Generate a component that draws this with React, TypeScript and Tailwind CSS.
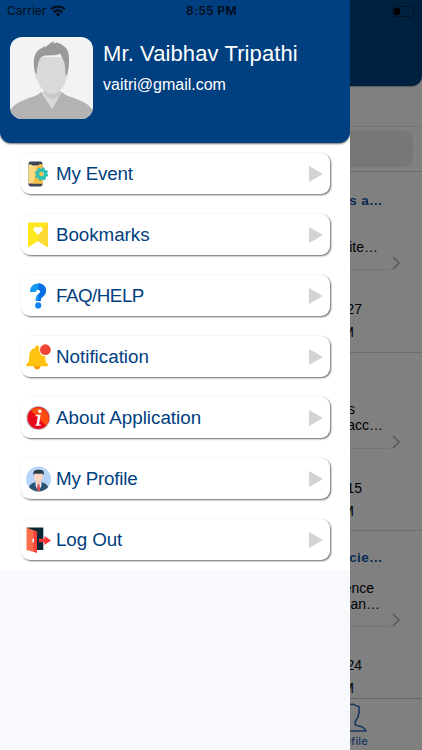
import React from 'react';

function WifiIcon() {
  return (
    <svg width="16" height="12" viewBox="0 0 16 12" fill="none" stroke="#000c18" strokeWidth="2.2">
      <path d="M1.2 4.3a9.7 9.7 0 0 1 13.6 0" />
      <path d="M3.7 7.2a6.1 6.1 0 0 1 8.6 0" />
      <path d="M5.6 9.1a3.5 3.5 0 0 1 4.8 0L8 11.6z" fill="#000c18" stroke="none" />
    </svg>
  );
}

function EventIcon() {
  return (
    <svg width="26" height="26" viewBox="0 0 26 26">
      <rect x="2.5" y="0.5" width="14" height="25" rx="2.2" fill="#3b4757" />
      <path d="M2.5 3.5h3l1 1h6l1-1h3v19h-14z" fill="#fedb82" />
      <path d="M11 4.5h1.5l1-1h3v19H7z" fill="#fbbe45" />
      <circle cx="15.5" cy="13" r="3.9" fill="none" stroke="#2fc1b6" strokeWidth="3.2" />
      <circle cx="15.5" cy="13" r="5.8" fill="none" stroke="#2fc1b6" strokeWidth="1.8" strokeDasharray="2.55 2" />
    </svg>
  );
}

function BookmarkIcon() {
  return (
    <svg width="26" height="26" viewBox="0 0 26 26">
      <path d="M2 0.5h20v25l-10-6.5-10 6.5z" fill="#ffe91c" />
      <path d="M22 0.5v25L12 19V13z" fill="#fdd934" />
      <path d="M12 13 8 9c-2-2.8 1.6-6 4-3.3C14.4 3 18 6.2 16 9z" fill="#fff" />
    </svg>
  );
}

function HelpIcon() {
  return (
    <svg width="26" height="26" viewBox="1 0 26 26">
      <path d="M5 9C5 3.5 8.4.5 13.1.5 17.7.5 21 3.2 21 7.5c0 3.4-1.8 5.3-3.7 6.7-1.1.8-1.5 1.4-1.5 3.8h-5.2c0-4.3 1-5.600 3.3-7.200 1.900-1.400 1.500-4.100-.8-4.100-1.500 0-2.300.800-2.300 2.300z" fill="#149bf3" />
      <path d="M13.1.5C17.7.5 21 3.2 21 7.5c0 3.4-1.8 5.3-3.7 6.7-1.1.8-1.500 1.400-1.500 3.800h-2.600v-6.600l.7-.6c1.900-1.400 1.500-4.100-.8-4.100z" fill="#086ee2" />
      <circle cx="13.2" cy="22.4" r="3.1" fill="#1383ed" />
    </svg>
  );
}

function BellIcon() {
  return (
    <svg width="26" height="26" viewBox="0 0 26 26">
      <path d="M7.800 22h6.800c-.3 4.500-6.500 4.500-6.800 0z" fill="#f8990c" />
      <path d="M11.200 1.400c1.300 0 2 .8 2 2 0 7 2.300 8.500 6.100 8.700v1.600c0 3.900 1 5.100 2.500 6.200.9.7.6 2.300-.7 2.300H1.400C0 22.200-.2 20.500.8 19.800c2.100-1.600 2.400-3.400 2.400-7.200 0-4.800 2.100-7.800 6-8.700V3.400c0-1.200.8-2 2-2z" fill="#ffc20e" />
      <circle cx="19.400" cy="5.700" r="5.400" fill="#f24537" />
    </svg>
  );
}

function InfoIcon() {
  return (
    <svg width="26" height="26" viewBox="0 0 26 26">
      <circle cx="12.300" cy="13" r="12" fill="#c4bfc0" />
      <circle cx="12.300" cy="13" r="10.900" fill="#e8081c" />
      <path d="M4.600 5.300a10.900 10.900 0 0 1 15.400 15.400z" fill="#fc4d10" />
      <circle cx="13.800" cy="6.200" r="1.700" fill="#fff" />
      <path d="M9.800 9.800h4.800l-1.600 9.600h1.700v1.400H9.400l.2-1.400h.9l1.300-8.200h-2z" fill="#fff" />
    </svg>
  );
}

function ProfileIcon() {
  return (
    <svg width="26" height="26" viewBox="0 0 26 26">
      <circle cx="12.500" cy="13" r="12.500" fill="#b7d5fa" />
      <path d="M2.900 21c1-3.200 4.800-4.300 7-5h5.200c2.200.7 6 1.800 7 5a12.500 12.500 0 0 1-19.200 0z" fill="#2a5575" />
      <path d="M9.500 15.500h6l-.2 4.500-2.800 5.400L9.700 20z" fill="#f1f3f7" />
      <path d="M11.600 18h1.800l.8 6-1.700 1.500-1.700-1.500z" fill="#d94c50" />
      <path d="M10.300 13h4.400v3.500l-2.200 1.800-2.200-1.800z" fill="#f3bea6" />
      <path d="M8.200 7h8.600v4.300c0 2.200-2 4.700-4.300 4.700s-4.300-2.500-4.300-4.700z" fill="#fcd6c2" />
      <path d="M7.600 9.500c-.8-3.200.2-4.800 2.200-5.400 2-.7 5.200-.4 6.400.1 1.700.8 2 2.500 1.200 5.300L16.700 7.800H8.400z" fill="#283d48" />
    </svg>
  );
}

function LogoutIcon() {
  return (
    <svg width="26" height="26" viewBox="0 0 26 26">
      <path d="M1 .5h16.300v22.600H9z" fill="#0b2735" />
      <path d="M.5.500l10.500 4.200v21L.5 23z" fill="#fd6e4d" />
      <path d="M7.500 3.300l3.500 1.400v21l-3.500-.9z" fill="#f9403b" />
      <rect x="6.500" y="11.500" width="1.400" height="4.300" rx=".7" fill="#fff" />
      <path d="M13 11.800h5.500V9l6.500 4.500-6.500 4.500v-2.800H13z" fill="#fb3434" />
    </svg>
  );
}

function Avatar() {
  return (
    <svg width="83" height="82" viewBox="0 0 83 82" className="shrink-0 rounded-xl bg-[#f3f3f3]">
      <path d="M0 82v-8c4-8 12-10 19-13 6-2 9-3 12-6h21c3 3 6 4 12 6 7 3 15 5 19 13v8z" fill="#b3b3b3" />
      <path d="M31 55l11 17 10-17z" fill="#dadada" />
      <path d="M33 54h18l-1 4c-4 5-11 5-15 0z" fill="#c9c9c9" />
      <path d="M24.500 28l3 2v14c-2-2-3-7-3-16zM58.500 28l-3 2v14c2-2 3-7 3-16z" fill="#dadada" />
      <path d="M27 20h29c1 10 1 17-.5 24-2 8-8 13-13.500 13s-12-5-14-13c-1.500-7-1.500-14-1-24z" fill="#dadada" />
      <path d="M26 38c-3-8-3-17 0-22 2-4 6-4 9-8l-1 3 8-6 2-.5-1 2 4-1c5 2 9 4 11 9 2 7 1 16-1 23l-1.500 1c0-8-.5-13-2.500-16-1-2-2-4-2.500-6-7 4-18-1-21 6-2 4-2 10-3.500 15.500z" fill="#999" />
    </svg>
  );
}

const menuItems = [
  { label: 'My Event', icon: <EventIcon />, spacing: 'tracking-[-0.2px]' },
  { label: 'Bookmarks', icon: <BookmarkIcon />, spacing: 'tracking-[-0.05px]' },
  { label: 'FAQ/HELP', icon: <HelpIcon />, spacing: 'tracking-[-0.5px]' },
  { label: 'Notification', icon: <BellIcon />, spacing: 'tracking-normal' },
  { label: 'About Application', icon: <InfoIcon />, spacing: 'tracking-normal' },
  { label: 'My Profile', icon: <ProfileIcon />, spacing: 'tracking-[-0.2px]' },
  { label: 'Log Out', icon: <LogoutIcon />, spacing: 'tracking-[-0.1px]' },
];

function StatusBar() {
  return (
    <div className="absolute inset-x-0 top-0 z-10 flex h-[22px] items-center text-[12px] text-[#000c18] font-[Inter,sans-serif]">
      <div className="flex w-[186px] items-center gap-[4px] pl-[7px]">
        <span className="tracking-normal">Carrier</span>
        <WifiIcon />
      </div>
      <span className="font-semibold tracking-[0.35px] whitespace-nowrap">8:55 PM</span>
      <svg width="25" height="11" viewBox="0 0 25 11" className="mr-[5px] ml-auto">
        <rect x=".5" y=".5" width="21" height="10" rx="2.500" fill="none" stroke="#001326" />
        <rect x="2" y="2" width="6" height="7" rx="1" fill="#000" />
        <path d="M23 3.500q1.500 2 0 4z" fill="#001326" />
      </svg>
    </div>
  );
}

function Drawer() {
  return (
    <div className="flex w-[350px] shrink-0 flex-col bg-[#f8f9fc]">
      <div className="bg-white pb-[10px]">
        <div className="flex h-[143px] gap-[10px] rounded-b-[11px] bg-[#004080] pt-[37px] pl-[10px] text-white shadow-[0_1px_2px_rgba(0,0,0,0.55)]">
          <Avatar />
          <div className="pt-[3px]">
            <div className="text-[22px] leading-[28px] tracking-[0.1px]">Mr. Vaibhav Tripathi</div>
            <div className="pt-[7px] text-base leading-5">vaitri@gmail.com</div>
          </div>
        </div>
        <div className="flex flex-col gap-[20px] pt-[10px] pr-[20px] pl-[21px]">
          {menuItems.map((item) => (
            <div
              key={item.label}
              className="flex h-[41px] items-center rounded-[9px] bg-white pr-[7px] pl-[5px] shadow-[1px_1px_2px_rgba(0,0,0,0.6)]"
            >
              {item.icon}
              <span className={`ml-[4px] text-[18.8px] leading-6 text-[#004080] ${item.spacing}`}>{item.label}</span>
              <svg width="14" height="16" viewBox="0 0 14 16" className="ml-auto">
                <path d="M0 0l14 8-14 8z" fill="#d3d3d3" />
              </svg>
            </div>
          ))}
        </div>
      </div>
    </div>
  );
}

function Chevron() {
  return (
    <svg width="8" height="14" viewBox="0 0 8 14" fill="none" stroke="#5c5c5c" strokeWidth="1.7" className="mr-[22px] ml-auto">
      <path d="M1 1l6 6-6 6" />
    </svg>
  );
}

// The part of the event list left visible beside the open drawer
function EventList() {
  return (
    <div className="flex min-w-0 flex-1 flex-col overflow-hidden bg-[#808080] text-base text-black">
      <div className="h-[86px] rounded-br-[10px] bg-[#002040] shadow-[0_1px_1px_rgba(0,0,0,0.3)]"></div>
      <div className="h-[41px] border-b border-[#747474]"></div>
      <div className="h-[45px] border-b border-[#6d6d6d] pt-[4px] pr-[9px]">
        <div className="h-[36px] rounded-r-[9px] bg-[#777777]"></div>
      </div>

      <div className="flex h-[181px] flex-col border-b border-[#6d6d6d] pt-[20px]">
        <div className="flex justify-end pr-[39px] text-[13.5px] leading-[18px] font-bold tracking-[0.4px] whitespace-nowrap text-[#0a2a54]">s a…</div>
        <div className="mt-[28px] flex justify-end pr-[44px] text-[14px] leading-[18px] whitespace-nowrap">ite…</div>
        <div className="flex h-[14px] items-center"><Chevron /></div>
        <div className="-mt-[1px] mr-[32px] border-t border-[#747480]"></div>
        <div className="mt-[30px] flex justify-end pr-[60px] text-[14px] leading-[18px]">27</div>
        <div className="mt-[5px] flex justify-end pr-[68px] text-[14px] leading-[18px]">M</div>
      </div>

      <div className="flex h-[178px] flex-col border-b border-[#6d6d6d] pt-[48px]">
        <div className="flex justify-end pr-[67px] text-[14px] leading-[16px]">s</div>
        <div className="flex justify-end pr-[39px] text-[14px] leading-[16px] whitespace-nowrap">acc…</div>
        <div className="mt-[2px] flex h-[14px] items-center"><Chevron /></div>
        <div className="-mt-[1px] mr-[32px] border-t border-[#747480]"></div>
        <div className="mt-[30px] flex justify-end pr-[60px] text-[14px] leading-[18px]">15</div>
        <div className="mt-[5px] flex justify-end pr-[68px] text-[14px] leading-[18px]">M</div>
      </div>

      <div className="flex h-[167px] flex-col pt-[18px]">
        <div className="flex justify-end pr-[39px] text-[13.5px] leading-[18px] font-bold tracking-[0.4px] whitespace-nowrap text-[#0a2a54]">cie…</div>
        <div className="mt-[13px] flex justify-end pr-[48px] text-[14px] leading-[16px] whitespace-nowrap">ence</div>
        <div className="flex justify-end pr-[42px] text-[14px] leading-[16px] whitespace-nowrap">an…</div>
        <div className="mt-[1px] flex h-[14px] items-center"><Chevron /></div>
        <div className="-mt-[1px] mr-[32px] border-t border-[#747474]"></div>
        <div className="mt-[29px] flex justify-end pr-[60px] text-[14px] leading-[18px]">24</div>
        <div className="mt-[5px] flex justify-end pr-[68px] text-[14px] leading-[18px]">M</div>
      </div>

      <div className="flex-1 border-t border-[#666666] text-[#17365f]">
        <svg width="17" height="33" viewBox="0 0 17 33" fill="none" stroke="currentColor" strokeWidth="1.6">
          <path d="M0 5.500c2-.5 4-.2 5.500 1 3 .2 4.500 1.500 3.500 4-.8 1.500.8 2.200 0 3.500l-1 3c.5 1.500-1 2-1.500 3.500-1.500 2-2 3.500-1 5.500 4 1 9.500 1.500 10.300 6H0" />
        </svg>
        <div className="flex justify-end pr-[54px] text-[11px] leading-[18px] font-medium tracking-[0.2px] font-[Inter,sans-serif]">Profile</div>
      </div>
    </div>
  );
}

export default function App() {
  return (
    <div className="relative flex h-[750px] w-[422px] overflow-hidden font-['Liberation_Sans',sans-serif]">
      <Drawer />
      <EventList />
      <StatusBar />
    </div>
  );
}
